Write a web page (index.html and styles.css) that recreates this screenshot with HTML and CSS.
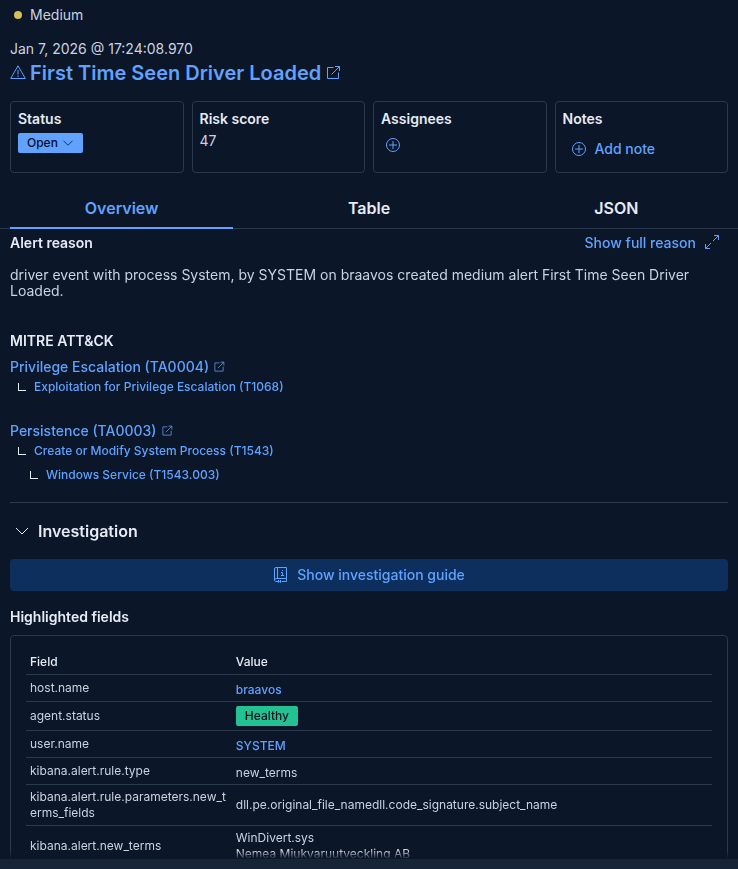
FILE: index.html
```
<!DOCTYPE html>
<html lang="en">
<head>
    <meta charset="UTF-8">
    <meta name="viewport" content="width=device-width, initial-scale=1.0">
    <title>First Time Seen Driver Loaded</title>
    <link rel="stylesheet" href="styles.css">
</head>
<body>
    <!-- shared icons -->
    <svg class="icon-defs" aria-hidden="true">
        <symbol id="popout" viewBox="0 0 16 16">
            <path d="M8.5 2.500h-6v11h11v-6M10 1.500h4.500V6M14.500 1.500l-8 8" />
        </symbol>
        <symbol id="plus" viewBox="0 0 16 16">
            <circle cx="8" cy="8" r="6.5" />
            <path d="M8 4v8M4 8h8" />
        </symbol>
        <symbol id="arrow-down" viewBox="0 0 16 16">
            <path d="M2 5l6 6 6-6" />
        </symbol>
    </svg>

    <div class="flyout">
        <header class="header">
            <div class="severity"><span class="dot"></span>Medium</div>
            <div class="timestamp">Jan 7, 2026 @ 17:24:08.970</div>
            <h1>
                <svg class="icon" viewBox="0 0 16 16"><path d="M8 .8L15.300 13.500H.7zM8 5v4.500M8 10.500v1.500" /></svg>
                <a href="#">First Time Seen Driver Loaded</a>
                <svg class="icon"><use href="#popout" /></svg>
            </h1>
            <div class="cards">
                <div class="card">
                    <h2>Status</h2>
                    <button class="status-button">Open <svg class="icon-small"><use href="#arrow-down" /></svg></button>
                </div>
                <div class="card">
                    <h2>Risk score</h2>
                    <div class="score">47</div>
                </div>
                <div class="card">
                    <h2>Assignees</h2>
                    <button class="icon-button" aria-label="Assign alert"><svg class="icon"><use href="#plus" /></svg></button>
                </div>
                <div class="card">
                    <h2>Notes</h2>
                    <button class="text-button note-button"><svg class="icon"><use href="#plus" /></svg>Add note</button>
                </div>
            </div>
        </header>

        <nav class="tabs" role="tablist">
            <button class="tab active" role="tab" aria-selected="true">Overview</button>
            <button class="tab" role="tab">Table</button>
            <button class="tab" role="tab">JSON</button>
        </nav>

        <main class="body">
            <div class="reason-head">
                <h2>Alert reason</h2>
                <button class="text-button">Show full reason
                    <svg class="icon" viewBox="0 0 16 16"><path d="M10 .5h4.500V5M14.500 .5l-5.500 5.500M7 8l-5.500 5.500M1.500 9v4.500H6" /></svg>
                </button>
            </div>
            <p class="reason">driver event with process System, by SYSTEM on braavos created medium alert First Time Seen Driver Loaded.</p>

            <h2>MITRE ATT&amp;CK</h2>
            <div class="tactic">
                <a href="#">Privilege Escalation (TA0004) <svg class="icon-small"><use href="#popout" /></svg></a>
                <div class="technique"><span class="elbow"></span><a href="#">Exploitation for Privilege Escalation (T1068)</a></div>
            </div>
            <div class="tactic">
                <a href="#">Persistence (TA0003) <svg class="icon-small"><use href="#popout" /></svg></a>
                <div class="technique"><span class="elbow"></span><a href="#">Create or Modify System Process (T1543)</a></div>
                <div class="technique subtechnique"><span class="elbow"></span><a href="#">Windows Service (T1543.003)</a></div>
            </div>

            <hr>

            <button class="section-toggle" aria-expanded="true"><svg class="icon"><use href="#arrow-down" /></svg>Investigation</button>
            <button class="guide-button">
                <svg class="icon" viewBox="0 0 16 16">
                    <path d="M4.500 11.500V.5h9v11H3.500A2 2 0 0 0 1.500 13V2A1.500 1.500 0 0 1 3 .5h1.500M1.500 12.500A1.500 1.500 0 0 0 3 14.500h2M8.500 14.500h5v-3" />
                    <path d="M8 5.500h1.500v3M8 8.500h3M9 3.500h1M5.500 13v2.500l1-1 1 1V13" />
                </svg>
                Show investigation guide
            </button>

            <h2>Highlighted fields</h2>
            <div class="fields">
                <table>
                    <thead>
                        <tr><th>Field</th><th>Value</th></tr>
                    </thead>
                    <tbody>
                        <tr><td>host.name</td><td class="value"><a href="#">braavos</a></td></tr>
                        <tr><td>agent.status</td><td><span class="badge">Healthy</span></td></tr>
                        <tr><td>user.name</td><td class="value"><a href="#">SYSTEM</a></td></tr>
                        <tr><td>kibana.alert.rule.type</td><td class="value">new_terms</td></tr>
                        <tr><td>kibana.alert.rule.parameters.new_terms_fields</td><td>dll.pe.original_file_namedll.code_signature.subject_name</td></tr>
                        <tr><td>kibana.alert.new_terms</td><td>WinDivert.sys<br>Nemea Mjukvaruutveckling AB</td></tr>
                    </tbody>
                </table>
            </div>
        </main>

        <footer class="footer"></footer>
    </div>
</body>
</html>
```

FILE: styles.css
```
* {
    box-sizing: border-box;
}
body {
    margin: 0;
    background: #0b1628;
    color: #cad3e2;
    font-family: Inter, sans-serif;
    font-size: 14px;
    line-height: 20px;
}
h1, h2, p {
    margin: 0;
}
h2 {
    color: #e6ebf4;
    font-size: 14px;
    font-weight: 600;
    line-height: 20px;
}
a {
    color: #61a2ff;
    font-weight: 500;
    text-decoration: none;
}
button {
    padding: 0;
    border: 0;
    background: none;
    color: #61a2ff;
    font: inherit;
    font-weight: 500;
    cursor: pointer;
}
svg {
    flex: none;
    fill: none;
    stroke: currentColor;
}
.icon-defs {
    position: absolute;
    width: 0;
    height: 0;
}
.icon {
    width: 16px;
    height: 16px;
}
.icon-small {
    width: 12px;
    height: 12px;
}
.flyout {
    display: flex;
    flex-direction: column;
    height: 100vh;
}

/* header */
.header {
    padding: 5px 10px 15px;
}
.severity {
    display: flex;
    align-items: center;
    gap: 8px;
    padding-left: 4px;
}
.dot {
    width: 8px;
    height: 8px;
    border-radius: 50%;
    background: #d6bf57;
}
.timestamp {
    margin-top: 14px;
}
h1 {
    display: flex;
    align-items: center;
    gap: 4px;
    margin-top: 2px;
    color: #61a2ff;
    font-size: 20px;
    line-height: 24px;
}
h1 a {
    font-weight: 600;
}
.cards {
    display: grid;
    grid-template-columns: repeat(4, 1fr);
    gap: 8px;
    margin-top: 16px;
}
.card {
    height: 72px;
    padding: 7px;
    border: 1px solid #2b394f;
    border-radius: 4px;
}
.status-button {
    display: flex;
    align-items: center;
    gap: 4px;
    height: 20px;
    margin-top: 4px;
    padding: 0 9px;
    border-radius: 2px;
    background: #61a2ff;
    color: #07101f;
    font-size: 12px;
}
.score {
    margin-top: 2px;
}
.icon-button {
    display: flex;
    padding: 8px 4px;
}
.text-button {
    display: flex;
    align-items: center;
    gap: 8px;
}
.note-button {
    padding: 10px 8px;
}

/* tabs */
.tabs {
    display: flex;
    gap: 24px;
    padding: 0 10px;
    border-bottom: 1px solid #2b394f;
}
.tab {
    flex: 1;
    height: 41px;
    margin-bottom: -1px;
    border-bottom: 2px solid transparent;
    color: #e6ebf4;
    font-size: 16px;
    font-weight: 600;
}
.tab.active {
    border-color: #61a2ff;
    color: #61a2ff;
}

/* scrolling content, fades out above the footer */
.body {
    flex: 1;
    min-height: 0;
    padding: 4px 10px;
    overflow-y: auto;
    scrollbar-width: none;
    mask-image: linear-gradient(to bottom, #000 calc(100% - 8px), transparent);
}
.reason-head {
    display: flex;
    justify-content: space-between;
    padding-right: 8px;
}
.reason {
    margin: 14px 0 32px;
    line-height: 16px;
}
.tactic {
    margin: 6px 0 24px;
}
.tactic > a {
    display: flex;
    align-items: center;
    gap: 4px;
}
.technique {
    display: flex;
    align-items: center;
    gap: 8px;
    padding-left: 8px;
    font-size: 12px;
}
.subtechnique {
    margin-top: 4px;
    padding-left: 20px;
}
.elbow {
    width: 8px;
    height: 8px;
    border: solid #e6ebf4;
    border-width: 0 0 1px 1px;
}
hr {
    margin: -7px 0 16px;
    border: 0;
    border-top: 1px solid #2b394f;
}
.section-toggle {
    display: flex;
    align-items: center;
    gap: 8px;
    padding-left: 4px;
    color: #e6ebf4;
    font-size: 16px;
    font-weight: 600;
    line-height: 24px;
}
.guide-button {
    display: flex;
    align-items: center;
    justify-content: center;
    gap: 8px;
    width: 100%;
    height: 32px;
    margin: 16px 0;
    border-radius: 4px;
    background: #0d2f5e;
}
.fields {
    margin-top: 8px;
    padding: 14px 15px;
    border: 1px solid #2b394f;
    border-radius: 4px;
}
table {
    width: 100%;
    border-spacing: 0;
    table-layout: fixed;
    font-size: 12px;
    line-height: 16px;
}
th, td {
    padding: 4px;
    border-bottom: 1px solid #2b394f;
    text-align: left;
    overflow-wrap: anywhere;
}
th {
    color: #e6ebf4;
    font-weight: 500;
}
th:first-child {
    width: 30%;
}
.value {
    padding: 7px 4px 3px;
}
.badge {
    display: block;
    width: fit-content;
    padding: 0 9px;
    border-radius: 2px;
    background: #24c292;
    color: #07101f;
    font-weight: 500;
    line-height: 20px;
}
.footer {
    height: 10px;
    background: #172336;
}
```
